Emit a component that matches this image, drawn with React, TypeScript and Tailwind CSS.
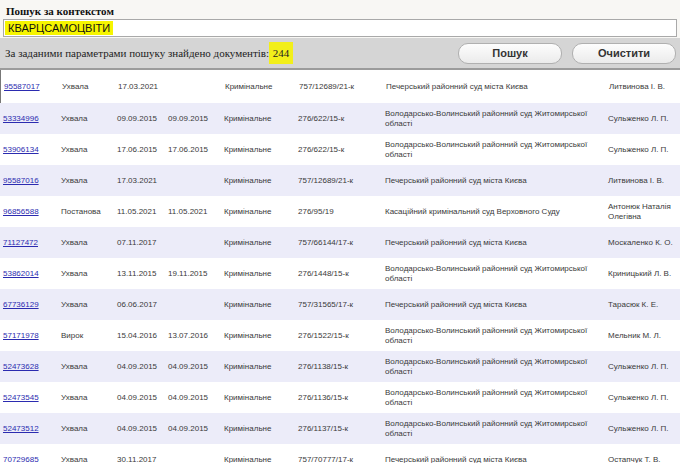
import React from 'react';

type Row = {
  id: string;
  kind: string;
  date1: string;
  date2: string;
  cat: string;
  num: string;
  court: string;
  judge: string;
};

const COURT_KYIV = 'Печерський районний суд міста Києва';
const COURT_ZHYT = 'Володарсько-Волинський районний суд Житомирської області';

const ROWS: Row[] = [
  { id: '95587017', kind: 'Ухвала', date1: '17.03.2021', date2: '', cat: 'Кримінальне', num: '757/12689/21-к', court: COURT_KYIV, judge: 'Литвинова І. В.' },
  { id: '53334996', kind: 'Ухвала', date1: '09.09.2015', date2: '09.09.2015', cat: 'Кримінальне', num: '276/622/15-к', court: COURT_ZHYT, judge: 'Сульженко Л. П.' },
  { id: '53906134', kind: 'Ухвала', date1: '17.06.2015', date2: '17.06.2015', cat: 'Кримінальне', num: '276/622/15-к', court: COURT_ZHYT, judge: 'Сульженко Л. П.' },
  { id: '95587016', kind: 'Ухвала', date1: '17.03.2021', date2: '', cat: 'Кримінальне', num: '757/12689/21-к', court: COURT_KYIV, judge: 'Литвинова І. В.' },
  { id: '96856588', kind: 'Постанова', date1: '11.05.2021', date2: '11.05.2021', cat: 'Кримінальне', num: '276/95/19', court: 'Касаційний кримінальний суд Верховного Суду', judge: 'Антонюк Наталія Олегівна' },
  { id: '71127472', kind: 'Ухвала', date1: '07.11.2017', date2: '', cat: 'Кримінальне', num: '757/66144/17-к', court: COURT_KYIV, judge: 'Москаленко К. О.' },
  { id: '53862014', kind: 'Ухвала', date1: '13.11.2015', date2: '19.11.2015', cat: 'Кримінальне', num: '276/1448/15-к', court: COURT_ZHYT, judge: 'Криницький Л. В.' },
  { id: '67736129', kind: 'Ухвала', date1: '06.06.2017', date2: '', cat: 'Кримінальне', num: '757/31565/17-к', court: COURT_KYIV, judge: 'Тарасюк К. Е.' },
  { id: '57171978', kind: 'Вирок', date1: '15.04.2016', date2: '13.07.2016', cat: 'Кримінальне', num: '276/1522/15-к', court: COURT_ZHYT, judge: 'Мельник М. Л.' },
  { id: '52473628', kind: 'Ухвала', date1: '04.09.2015', date2: '04.09.2015', cat: 'Кримінальне', num: '276/1138/15-к', court: COURT_ZHYT, judge: 'Сульженко Л. П.' },
  { id: '52473545', kind: 'Ухвала', date1: '04.09.2015', date2: '04.09.2015', cat: 'Кримінальне', num: '276/1136/15-к', court: COURT_ZHYT, judge: 'Сульженко Л. П.' },
  { id: '52473512', kind: 'Ухвала', date1: '04.09.2015', date2: '04.09.2015', cat: 'Кримінальне', num: '276/1137/15-к', court: COURT_ZHYT, judge: 'Сульженко Л. П.' },
  { id: '70729685', kind: 'Ухвала', date1: '30.11.2017', date2: '', cat: 'Кримінальне', num: '757/70777/17-к', court: COURT_KYIV, judge: 'Остапчук Т. В.' },
];

function ResultRow({ row, index }: { row: Row; index: number }) {
  const even = index % 2 === 1;
  return (
    <div
      className={`grid grid-cols-[58px_56px_51px_56px_74px_87px_223px_1fr] items-center pl-[3px] text-[8px] leading-[10px] text-[#3a3a3a] ${
        index === 0 ? 'h-[33px] border-l border-[#777]' : 'h-[31px]'
      } ${even ? 'bg-[#ececf9]' : 'bg-white'}`}
    >
      <a href="#" className="text-[#2b2bb0] underline">
        {row.id}
      </a>
      <span>{row.kind}</span>
      <span>{row.date1}</span>
      <span>{row.date2}</span>
      <span>{row.cat}</span>
      <span>{row.num}</span>
      <span className="max-w-[205px]">{row.court}</span>
      <span>{row.judge}</span>
    </div>
  );
}

export default function App() {
  return (
    <div className="w-[680px] h-[463px] overflow-hidden bg-white" style={{ fontFamily: '"Liberation Sans", Arial, sans-serif' }}>
      {/* Search field */}
      <div className="bg-[#f8f7f4] px-[3px] pt-[5px] pb-[1px]">
        <div className="pl-[3px] text-[11px] leading-[13px] font-bold text-[#111] font-['Liberation_Serif',serif]">
          Пошук за контекстом
        </div>
        <div className="mt-[1px] h-[18px] w-[674px] border border-[#a9a9a9] bg-white flex items-center">
          <span className="ml-[1px] bg-[#f6f500] px-[3px] text-[11px] leading-[14px] text-[#111]">КВАРЦСАМОЦВІТИ</span>
        </div>
      </div>

      {/* Result summary and buttons */}
      <div className="h-[32px] bg-[#d5d5d5] border-b-2 border-[#9b9b9b] flex items-center justify-between pl-[5px] pr-[4px]">
        <div className="text-[11px] text-[#222] font-['Liberation_Serif',serif] flex items-center">
          За заданими параметрами пошуку знайдено документів:&nbsp;
          <span className="bg-[#f2ef1a] px-[4px] py-[3px] -ml-[3px]">244</span>
        </div>
        <div className="flex gap-[10px]">
          <button className="w-[104px] h-[21px] rounded-[10px] border border-[#b0b0b0] bg-gradient-to-b from-[#fdfdfd] to-[#ebebeb] text-[11px] font-bold text-[#333]">
            Пошук
          </button>
          <button className="w-[104px] h-[21px] rounded-[10px] border border-[#b0b0b0] bg-gradient-to-b from-[#fdfdfd] to-[#ebebeb] text-[11px] font-bold text-[#333]">
            Очистити
          </button>
        </div>
      </div>

      {/* Results table */}
      <div className="flex flex-col">
        {ROWS.map((row, i) => (
          <ResultRow key={row.id + i} row={row} index={i} />
        ))}
      </div>
    </div>
  );
}
